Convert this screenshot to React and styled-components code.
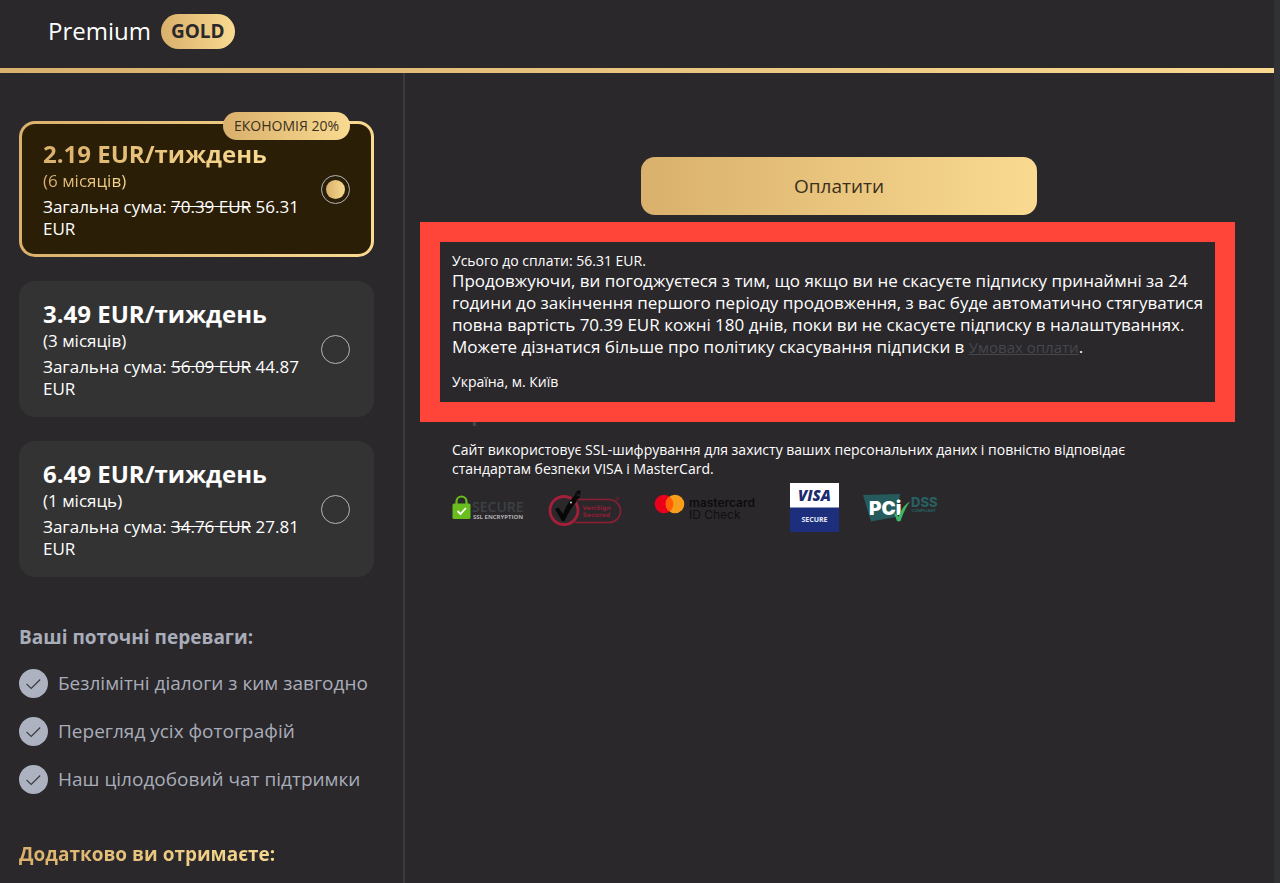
import React, { useState } from "react";
import styled, { createGlobalStyle } from "styled-components";

const GOLD = "linear-gradient(90deg, #d9b06c 0%, #f9da90 100%)";

const GlobalStyle = createGlobalStyle`
  *, *::before, *::after { box-sizing: border-box; }
  body {
    margin: 0;
    background: #2a282b;
    color: #fff;
    font-family: "Open Sans", "Noto Sans", sans-serif;
  }
  h1, h2, p, ul, fieldset { margin: 0; padding: 0; border: 0; }
`;

const Page = styled.div`
  display: flex;
  flex-direction: column;
  height: 100vh;
  overflow: hidden;
  border-right: 6px solid #313235;
`;

const Header = styled.header`
  display: flex;
  flex: none;
  align-items: center;
  gap: 10px;
  height: 73px;
  padding: 0 48px 6px;
  border-bottom: 5px solid;
  border-image: ${GOLD} 1;
`;

const Brand = styled.h1`
  font-size: 24px;
  line-height: 32px;
  font-weight: 400;
`;

const GoldPill = styled.span`
  padding: 0 10px;
  border-radius: 18px;
  background: ${GOLD};
  color: #2a282b;
  font-size: 19px;
  line-height: 35px;
  font-weight: 700;
`;

const Columns = styled.div`
  display: flex;
  flex: 1;
  min-height: 0;
`;

const Sidebar = styled.aside`
  flex: none;
  width: 405px;
  padding: 48px 29px 0 19px;
  border-right: 2px solid #3b3a3e;
`;

const Plans = styled.fieldset`
  display: flex;
  flex-direction: column;
  gap: 24px;
`;

const PlanCard = styled.label`
  position: relative;
  display: flex;
  align-items: center;
  justify-content: space-between;
  min-height: 136px;
  padding: 0 21px;
  border: 3px solid transparent;
  border-radius: 16px;
  background: ${(p) =>
    p.$active
      ? `linear-gradient(#2b1e07, #2b1e07) padding-box, ${GOLD} border-box`
      : "#333333 border-box"};
  cursor: pointer;
`;

const PlanText = styled.span`
  display: flex;
  flex-direction: column;
  align-items: flex-start;
  width: 264px;
`;

const goldText = (p) =>
  p.$gold ? `background: ${GOLD}; background-clip: text; color: transparent;` : "";

const Price = styled.span`
  font-size: 24px;
  line-height: 32px;
  font-weight: 700;
  ${goldText}
`;

const Period = styled.span`
  margin-bottom: 4px;
  font-size: 17px;
  line-height: 22px;
  ${goldText}
`;

const Total = styled.span`
  font-size: 17px;
  line-height: 22px;
`;

const Radio = styled.input`
  appearance: none;
  width: 29px;
  height: 29px;
  margin: 0;
  border: 1px solid #b4b4b8;
  border-radius: 50%;
`;

const Dial = styled.span`
  position: relative;
  display: flex;
  flex: none;
  &::after {
    content: "";
    position: absolute;
    inset: 5px;
    border-radius: 50%;
    background: ${(p) => (p.$active ? GOLD : "none")};
  }
`;

const Saving = styled.span`
  position: absolute;
  top: -12px;
  right: 21px;
  padding: 0 11px;
  border-radius: 14px;
  background: ${GOLD};
  color: #3a2f20;
  font-size: 14px;
  line-height: 28px;
`;

const SideTitle = styled.h2`
  margin-top: 46px;
  width: fit-content;
  font-size: 19px;
  line-height: 28px;
  font-weight: 700;
  color: #a9adb9;
  ${goldText}
`;

const Benefits = styled.ul`
  display: flex;
  flex-direction: column;
  gap: 19px;
  margin-top: 18px;
  list-style: none;
`;

const Benefit = styled.li`
  display: flex;
  align-items: center;
  gap: 10px;
  font-size: 19px;
  line-height: 29px;
  white-space: nowrap;
  color: #a9adb9;
  svg { flex: none; }
`;

const Checkout = styled.main`
  display: flex;
  flex: 1;
  flex-direction: column;
  min-width: 0;
  padding: 84px 48px 0 47px;
`;

const PayButton = styled.button`
  align-self: center;
  width: 396px;
  height: 58px;
  border: 0;
  border-radius: 14px;
  background: ${GOLD};
  color: #3a2f20;
  font-family: inherit;
  font-size: 19px;
  cursor: pointer;
`;

const Notice = styled.section`
  position: relative;
  z-index: 1;
  min-height: 200px;
  margin: 7px -9px 0 -32px;
  padding: 9px 0 0 12px;
  border: 20px solid #ff4539;
  background: #2a282b;
`;

const SmallText = styled.p`
  font-size: 14px;
  line-height: 19px;
`;

const Terms = styled.p`
  margin-bottom: 14px;
  font-size: 17px;
  line-height: 22px;
`;

const TermsLink = styled.a`
  font-size: 15px;
  color: #45474d;
`;

const Security = styled.section`
  margin-top: -18px;
  padding-right: 36px;
`;

const SecurityTitle = styled.h2`
  margin-bottom: 12px;
  color: #4a4a4e;
  font-size: 17px;
  line-height: 24px;
  font-weight: 700;
`;

const Badges = styled.div`
  display: flex;
  align-items: center;
  margin-top: 5px;
  svg { display: block; flex: none; }
`;

const BadgeSlot = styled.span`
  margin-right: ${(p) => p.$gap}px;
`;

const CheckIcon = () => (
  <svg width="29" height="29" viewBox="0 0 29 29" aria-hidden="true">
    <circle cx="14.5" cy="14.5" r="14.5" fill="#adb2c0" />
    <path d="M7.500 14.800l4.700 4.700 9-9" fill="none" stroke="#38363b" strokeWidth="1.100" />
  </svg>
);

const SslBadge = () => (
  <svg width="74" height="26" viewBox="0 0 74 26" role="img" aria-label="Secure SSL encryption">
    <path d="M4.500 10V6.500a5 5 0 0 1 10 0V10" fill="none" stroke="#69bd1e" strokeWidth="2.200" />
    <rect x="0.500" y="8.500" width="18" height="15.500" rx="1.500" fill="#69bd1e" />
    <path d="M5.500 16l3 3 5.500-6" fill="none" stroke="#fff" strokeWidth="1.800" />
    <text x="20" y="17" fontFamily="Open Sans, sans-serif" fontSize="14" fontWeight="600" fill="#3c4145">SECURE</text>
    <text x="21" y="24" fontFamily="Open Sans, sans-serif" fontSize="6" fontWeight="700" fill="#b0b0b2">SSL ENCRYPTION</text>
  </svg>
);

const VerisignBadge = () => (
  <svg width="74" height="38" viewBox="0 0 74 38" role="img" aria-label="VeriSign Secured">
    <path d="M27 10.500H61a11.500 11.500 0 0 1 0 23H27" fill="none" stroke="#8e1e35" strokeWidth="1.600" />
    <circle cx="16" cy="21.500" r="14" fill="#2a282b" stroke="#a61f3a" strokeWidth="2.800" />
    <path d="M7 20l3.500-1.500 4.500 6.500c3-8 7-14.500 13-20l1.500 2-1 1.500 3-2.500.500 2-4 4 .500.800C23.500 18 20 24.500 16.500 32h-2.500z" fill="#080808" />
    <path d="M27.500 5l2.500-3 2 .5-2 2.500 2.500-.500" fill="none" stroke="#080808" strokeWidth="1.300" />
    <circle cx="23" cy="13.500" r="1" fill="#d8d8d8" />
    <text x="34.500" y="20.500" fontFamily="DejaVu Sans, sans-serif" fontSize="6" fontWeight="700" fill="#8e1e35">VeriSign</text>
    <text x="34.500" y="27.500" fontFamily="DejaVu Sans, sans-serif" fontSize="6" fontWeight="700" fill="#8e1e35">Secured</text>
    <circle cx="69.500" cy="9.500" r="1.300" fill="none" stroke="#8e1e35" strokeWidth=".7" />
  </svg>
);

const MastercardBadge = () => (
  <svg width="104" height="30" viewBox="0 0 104 30" role="img" aria-label="Mastercard ID Check">
    <circle cx="10" cy="11" r="9.300" fill="#eb001b" />
    <circle cx="21" cy="11" r="9.300" fill="#f79e1b" />
    <path d="M15.500 3.500a9.300 9.300 0 0 1 0 15 9.300 9.300 0 0 1 0-15z" fill="#ff5f00" />
    <text x="35" y="14" fontFamily="Inter, sans-serif" fontSize="12" fontWeight="600" fill="#0d0c0e">mastercard</text>
    <text x="35" y="26" fontFamily="Inter, sans-serif" fontSize="12" fill="#100f11">ID Check</text>
  </svg>
);

const VisaBadge = () => (
  <svg width="49" height="49" viewBox="0 0 49 49" role="img" aria-label="Visa Secure">
    <rect width="49" height="25" fill="#fff" />
    <rect y="24.500" width="49" height="24.500" fill="#1d2f7c" />
    <text x="24.500" y="17.500" textAnchor="middle" fontFamily="Open Sans, sans-serif" fontSize="15" fontStyle="italic" fontWeight="800" fill="#1c2b6e">VISA</text>
    <text x="24.500" y="38.500" textAnchor="middle" fontFamily="Open Sans, sans-serif" fontSize="7" fontWeight="700" fill="#e6e9f5">SECURE</text>
  </svg>
);

const PciBadge = () => (
  <svg width="78" height="32" viewBox="0 0 78 32" role="img" aria-label="PCI DSS compliant">
    <path d="M0 3L37 2l-4 23-25 4.500z" fill="#255b5c" />
    <text x="6" y="22.500" fontFamily="Inter, sans-serif" fontSize="19" fontWeight="900" fill="#fff">PCi</text>
    <path d="M31 21.500c2-.500 3.500 1 4.500 3.500C38 17.500 42 12 47 9.500 43 15 40 21.500 37.500 29c-1.500.500-2.500.500-3.500 0-1-3-1.800-5-3-7.500z" fill="#3fb667" />
    <text x="48" y="14.500" fontFamily="Inter, sans-serif" fontSize="13" fontWeight="800" fill="#286062">DSS</text>
    <text x="48.500" y="20" fontFamily="Inter, sans-serif" fontSize="4" fontWeight="700" fill="#286062">COMPLIANT</text>
  </svg>
);

const plans = [
  { id: "6m", price: "2.19", period: "(6 місяців)", before: "70.39", now: "56.31", saving: "ЕКОНОМІЯ 20%" },
  { id: "3m", price: "3.49", period: "(3 місяців)", before: "56.09", now: "44.87" },
  { id: "1m", price: "6.49", period: "(1 місяць)", before: "34.76", now: "27.81" },
];

const benefits = [
  "Безлімітні діалоги з ким завгодно",
  "Перегляд усіх фотографій",
  "Наш цілодобовий чат підтримки",
];

export default function App() {
  const [selected, setSelected] = useState("6m");

  return (
    <>
      <GlobalStyle />
      <Page>
        <Header>
          <Brand>Premium</Brand>
          <GoldPill>GOLD</GoldPill>
        </Header>
        <Columns>
          <Sidebar>
            <Plans>
              {plans.map((plan) => {
                const active = plan.id === selected;
                return (
                  <PlanCard key={plan.id} $active={active}>
                    <PlanText>
                      <Price $gold={active}>{plan.price} EUR/тиждень</Price>
                      <Period $gold={active}>{plan.period}</Period>
                      <Total>
                        Загальна сума: <s>{plan.before} EUR</s> {plan.now} EUR
                      </Total>
                    </PlanText>
                    <Dial $active={active}>
                      <Radio
                        type="radio"
                        name="plan"
                        value={plan.id}
                        checked={active}
                        onChange={() => setSelected(plan.id)}
                      />
                    </Dial>
                    {plan.saving && <Saving>{plan.saving}</Saving>}
                  </PlanCard>
                );
              })}
            </Plans>
            <SideTitle>Ваші поточні переваги:</SideTitle>
            <Benefits>
              {benefits.map((text) => (
                <Benefit key={text}>
                  <CheckIcon />
                  {text}
                </Benefit>
              ))}
            </Benefits>
            <SideTitle $gold>Додатково ви отримаєте:</SideTitle>
          </Sidebar>
          <Checkout>
            <PayButton type="button">Оплатити</PayButton>
            <Notice>
              <SmallText>Усього до сплати: 56.31 EUR.</SmallText>
              <Terms>
                Продовжуючи, ви погоджуєтеся з тим, що якщо ви не скасуєте підписку принаймні за 24
                години до закінчення першого періоду продовження, з вас буде автоматично стягуватися
                повна вартість 70.39 EUR кожні 180 днів, поки ви не скасуєте підписку в
                налаштуваннях. Можете дізнатися більше про політику скасування підписки в{" "}
                <TermsLink href="#terms">Умовах оплати</TermsLink>.
              </Terms>
              <SmallText>Україна, м. Київ</SmallText>
            </Notice>
            <Security>
              <SecurityTitle>Гарантії безпеки</SecurityTitle>
              <SmallText>
                Сайт використовує SSL-шифрування для захисту ваших персональних даних і повністю
                відповідає стандартам безпеки VISA і MasterCard.
              </SmallText>
              <Badges>
                <BadgeSlot $gap={22}><SslBadge /></BadgeSlot>
                <BadgeSlot $gap={32}><VerisignBadge /></BadgeSlot>
                <BadgeSlot $gap={32}><MastercardBadge /></BadgeSlot>
                <BadgeSlot $gap={24}><VisaBadge /></BadgeSlot>
                <PciBadge />
              </Badges>
            </Security>
          </Checkout>
        </Columns>
      </Page>
    </>
  );
}
